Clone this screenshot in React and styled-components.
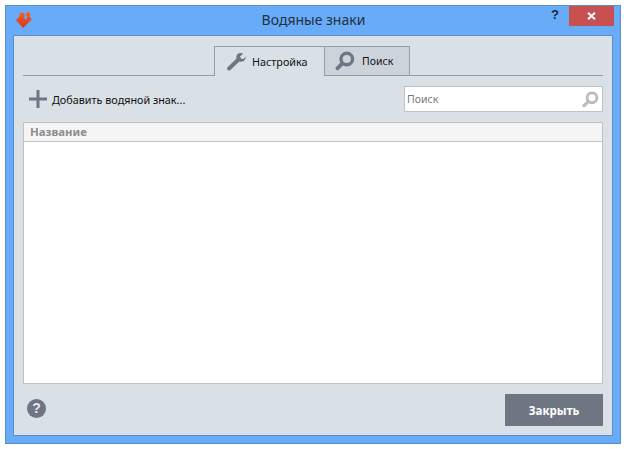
import React from "react";
import styled, {createGlobalStyle} from "styled-components";

const GlobalStyle = createGlobalStyle`
  html, body {
    margin: 0;
    padding: 0;
    background: #fff;
    font-family: "Noto Sans", "Open Sans", sans-serif;
  }
`;

function LogoIcon() {
    return (
        <svg width="18" height="18" viewBox="0 0 18 18">
            <defs>
                <linearGradient id="logoFill" x1="0" y1="0" x2="0" y2="1">
                    <stop offset="0" stopColor="#f2602a"/>
                    <stop offset="1" stopColor="#dc3612"/>
                </linearGradient>
            </defs>
            <path
                fill="url(#logoFill)"
                d="M1 9 L4.5 5.5 Q4 2 6.5 1.5 Q9.5 1 9.8 4 L9.2 7 Q9.6 9.4 11.4 8 L12.4 5.4 Q10.4 4.6 11 2.4 Q12.4 0.4 14.6 1.4 Q16 2.8 15 4.8 L14.2 5.6 L17 8 L8 17 Z"
            />
        </svg>
    );
}

function WrenchIcon() {
    return (
        <svg width="20" height="20" viewBox="0 0 20 20">
            <path
                fill="#6f7681"
                d="M12.6 1.2 Q15.4 0.4 17.4 1.6 L14 4.4 L15.2 6.8 L17.6 7 L19.6 4.2 Q20 7.4 17.8 9 Q15.8 10.2 13.4 9.4 L5 17.6 Q3.2 19.4 1.6 18 Q0.2 16.4 2 14.8 L10.4 6.8 Q9.8 3 12.6 1.2 Z"
            />
        </svg>
    );
}

function SearchIcon({size, color}) {
    return (
        <svg width={size} height={size} viewBox="0 0 18 18">
            <circle cx="10.6" cy="7.2" r="5.2" fill="none" stroke={color} strokeWidth="3"/>
            <path d="M6.6 11.2 L2.2 15.6" stroke={color} strokeWidth="3.4" strokeLinecap="round"/>
        </svg>
    );
}

function PlusIcon() {
    return (
        <svg width="18" height="18" viewBox="0 0 18 18">
            <path fill="#6f7682" d="M7.5 0 H10.5 V7.5 H18 V10.5 H10.5 V18 H7.5 V10.5 H0 V7.5 H7.5 Z"/>
        </svg>
    );
}

export default function App() {
    return (
        <>
            <GlobalStyle/>
            <Page>
                <Dialog>
                    <TitleBar>
                        <LogoSlot><LogoIcon/></LogoSlot>
                        <Title>Водяные знаки</Title>
                        <WindowActions>
                            <HelpMark>?</HelpMark>
                            <CloseButton>
                                <svg width="9" height="8" viewBox="0 0 9 8">
                                    <path d="M1 0.8 L8 7.2 M8 0.8 L1 7.2" stroke="#fff" strokeWidth="2"/>
                                </svg>
                            </CloseButton>
                        </WindowActions>
                    </TitleBar>
                    <Body>
                        <TabStrip>
                            <Tab $active>
                                <WrenchIcon/>
                                <span>Настройка</span>
                            </Tab>
                            <Tab>
                                <SearchIcon size={20} color="#6f7681"/>
                                <span>Поиск</span>
                            </Tab>
                        </TabStrip>
                        <Toolbar>
                            <AddButton>
                                <PlusIcon/>
                                <span>Добавить водяной знак...</span>
                            </AddButton>
                            <SearchBox>
                                <SearchInput placeholder="Поиск"/>
                                <SearchIcon size={17} color="#b9bcbc"/>
                            </SearchBox>
                        </Toolbar>
                        <ListPanel>
                            <ListHeader>Название</ListHeader>
                            <ListBody/>
                        </ListPanel>
                        <Footer>
                            <HelpCircle>?</HelpCircle>
                            <PrimaryButton>Закрыть</PrimaryButton>
                        </Footer>
                    </Body>
                </Dialog>
            </Page>
        </>
    );
}

const Page = styled.div`
  width: 626px;
  height: 449px;
  padding: 5px;
  box-sizing: border-box;
  overflow: hidden;
`;

const Dialog = styled.div`
  width: 616px;
  height: 439px;
  box-sizing: border-box;
  display: flex;
  flex-direction: column;
  background: #68abf9;
  border: 1px solid #5a8fc8;
  padding: 0 7px 7px;
`;

const TitleBar = styled.div`
  height: 29px;
  flex: none;
  display: grid;
  grid-template-columns: 1fr auto 1fr;
  align-items: start;
  margin-right: -1px;
`;

const LogoSlot = styled.div`
  display: flex;
  padding: 5px 0 0 2px;
`;

const Title = styled.div`
  font-size: 14px;
  line-height: 20px;
  padding-top: 4px;
  color: #23313f;
`;

const WindowActions = styled.div`
  display: flex;
  justify-content: flex-end;
  align-items: flex-start;
  gap: 10px;
`;

const HelpMark = styled.span`
  font-family: "Liberation Sans", sans-serif;
  font-weight: 700;
  font-size: 13px;
  line-height: 18px;
  color: #1c2733;
`;

const CloseButton = styled.div`
  width: 45px;
  height: 20px;
  background: #c75050;
  display: flex;
  align-items: center;
  justify-content: center;
`;

const Body = styled.div`
  flex: 1;
  min-height: 0;
  display: flex;
  flex-direction: column;
  background: #d9e0e6;
  border: 1px solid #5a8fc8;
  padding: 9px;
`;

const TabStrip = styled.div`
  height: 30px;
  flex: none;
  display: flex;
  justify-content: center;
  align-items: flex-end;
  border-bottom: 1px solid #9a9d9f;
  padding-right: 2px;
  box-sizing: content-box;
`;

const Tab = styled.div`
  width: ${(p) => (p.$active ? "111px" : "86px")};
  height: ${(p) => (p.$active ? "30px" : "29px")};
  box-sizing: border-box;
  display: flex;
  align-items: center;
  gap: ${(p) => (p.$active ? "6px" : "7px")};
  padding-left: ${(p) => (p.$active ? "11px" : "10px")};
  margin-bottom: ${(p) => (p.$active ? "-1px" : "0")};
  margin-left: ${(p) => (p.$active ? "0" : "-1px")};
  background: ${(p) => (p.$active ? "#d9e0e6" : "#ccd3da")};
  border: 1px solid #9a9d9f;
  border-bottom: none;
  font-size: ${(p) => (p.$active ? "10.8px" : "10.5px")};
  color: #111;
`;

const Toolbar = styled.div`
  flex: none;
  height: 26px;
  margin-top: 10px;
  display: flex;
  align-items: center;
  justify-content: space-between;
`;

const AddButton = styled.div`
  display: flex;
  align-items: center;
  gap: 5px;
  padding-left: 6px;
  font-size: 10.8px;
  color: #111;
`;

const SearchBox = styled.div`
  width: 199px;
  height: 26px;
  box-sizing: border-box;
  display: flex;
  align-items: center;
  padding: 0 3px 0 2px;
  background: #fff;
  border: 1px solid #bfc2c4;
`;

const SearchInput = styled.input`
  flex: 1;
  min-width: 0;
  border: none;
  outline: none;
  padding: 0;
  background: transparent;
  font-family: "Noto Sans", sans-serif;
  font-size: 10.5px;

  &::placeholder {
    color: #777;
    opacity: 1;
  }
`;

const ListPanel = styled.div`
  flex: 1;
  min-height: 0;
  margin-top: 10px;
  display: flex;
  flex-direction: column;
  border: 1px solid #bfc2c4;
`;

const ListHeader = styled.div`
  height: 18px;
  flex: none;
  padding-left: 6px;
  background: #f5f5f5;
  border-bottom: 1px solid #bfc2c4;
  font-size: 11.4px;
  font-weight: 700;
  line-height: 18px;
  color: #8c8c8c;
`;

const ListBody = styled.div`
  flex: 1;
  background: #fff;
`;

const Footer = styled.div`
  flex: none;
  height: 32px;
  margin-top: 10px;
  display: flex;
  align-items: center;
  justify-content: space-between;
  padding-left: 4px;
`;

const HelpCircle = styled.div`
  width: 19px;
  height: 19px;
  margin-bottom: 4px;
  border-radius: 50%;
  background: #6f7683;
  color: #e8eaec;
  display: flex;
  align-items: center;
  justify-content: center;
  font-family: "Liberation Sans", sans-serif;
  font-size: 14px;
  font-weight: 700;
`;

const PrimaryButton = styled.div`
  width: 98px;
  height: 32px;
  background: #6f7683;
  color: #fff;
  display: flex;
  align-items: center;
  justify-content: center;
  font-size: 11.5px;
  font-weight: 700;
`;
